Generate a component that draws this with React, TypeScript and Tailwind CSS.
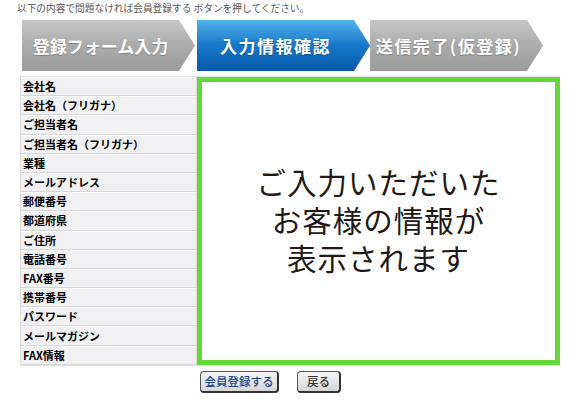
import React from "react";

const labels = [
  "会社名",
  "会社名（フリガナ）",
  "ご担当者名",
  "ご担当者名（フリガナ）",
  "業種",
  "メールアドレス",
  "郵便番号",
  "都道府県",
  "ご住所",
  "電話番号",
  "FAX番号",
  "携帯番号",
  "パスワード",
  "メールマガジン",
  "FAX情報",
];

const jp = "font-['Noto_Sans_CJK_JP','Noto_Sans',sans-serif]";

function Step({ label, active, spaced }: { label: string; active?: boolean; spaced?: boolean }) {
  return (
    <div
      className={`h-[51px] w-[173px] shrink-0 flex items-center justify-center pr-[16px] [clip-path:polygon(0_0,calc(100%-16px)_0,100%_50%,calc(100%-16px)_100%,0_100%)] ${
        active
          ? "bg-gradient-to-b from-[#52b2ea] via-[#1677c8] to-[#0a5aa8]"
          : "bg-gradient-to-b from-[#c6c6c6] via-[#ababab] to-[#9b9b9b]"
      }`}
    >
      <span
        className={`text-[17px] font-bold text-white ${spaced ? "tracking-[1.5px]" : ""} [text-shadow:0_1px_1px_rgba(0,0,0,0.25)]`}
      >
        {label}
      </span>
    </div>
  );
}

export default function App() {
  return (
    <div className={`w-[580px] h-[400px] bg-white overflow-hidden ${jp}`}>
      {/* Notice */}
      <p className="pl-[17px] pt-[2px] text-[9.7px] leading-[12px] text-[#555]">
        以下の内容で問題なければ会員登録する ボタンを押してください。
      </p>

      {/* Steps */}
      <div className="flex ml-[22px] mt-[6px]">
        <Step label="登録フォーム入力" />
        <div className="w-[2px]" />
        <Step label="入力情報確認" active spaced />
        <Step label="送信完了(仮登録)" spaced />
      </div>

      {/* Confirm table */}
      <div className="ml-[20px] mt-[5px] w-[540px] flex border-t border-b border-[#e2e2e2]">
        <div className="w-[177px] border-l border-r border-[#dcdcdc] flex flex-col">
          {labels.map((l) => (
            <div
              key={l}
              className="h-[19.2px] bg-[#f1f1f3] border-t border-white border-b border-b-[#d6d6d6] flex items-center pl-[2px] text-[11px] font-bold text-black leading-none"
            >
              {l}
            </div>
          ))}
        </div>
        <div className="flex-1 h-[288px] border-[5px] border-[#62d83a] flex items-center justify-center">
          <p className="text-center text-[29.5px] leading-[38px] tracking-[1px] text-[#231815] font-normal -mt-[4px]">
            ご入力いただいた
            <br />
            お客様の情報が
            <br />
            表示されます
          </p>
        </div>
      </div>

      {/* Buttons */}
      <div className="flex items-center ml-[200px] mt-[5px] gap-[18px]">
        <button className="h-[22px] w-[79px] rounded-[4px] border border-[#555] border-r-2 border-b-2 border-r-[#333] border-b-[#333] bg-gradient-to-b from-[#f6f6f6] to-[#d6d6d6] text-[11.5px] font-medium text-[#1e4690] leading-none">
          会員登録する
        </button>
        <button className="h-[22px] w-[44px] rounded-[4px] border border-[#555] border-r-2 border-b-2 border-r-[#333] border-b-[#333] bg-gradient-to-b from-[#f6f6f6] to-[#d6d6d6] text-[11.5px] font-medium text-[#333] leading-none">
          戻る
        </button>
      </div>
    </div>
  );
}
